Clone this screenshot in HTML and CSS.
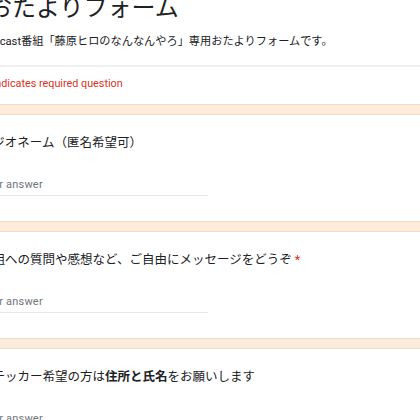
FILE: index.html
```html
<!DOCTYPE html>
<html lang="ja">
<head>
<meta charset="utf-8">
<title>おたよりフォーム</title>
<link rel="stylesheet" href="styles.css">
</head>
<body>
<div class="page">
  <div class="card header">
    <div class="title">おたよりフォーム</div>
    <div class="desc">Podcast番組「藤原ヒロのなんなんやろ」専用おたよりフォームです。</div>
    <div class="divider"></div>
    <div class="required">* Indicates required question</div>
  </div>
  <div class="card q">
    <div class="qtext">ラジオネーム（匿名希望可）</div>
    <div class="answer">Your answer</div>
  </div>
  <div class="card q">
    <div class="qtext">番組への質問や感想など、ご自由にメッセージをどうぞ<span class="star">*</span></div>
    <div class="answer">Your answer</div>
  </div>
  <div class="card q">
    <div class="qtext">ステッカー希望の方は<b>住所と氏名</b>をお願いします</div>
    <div class="answer">Your answer</div>
  </div>
</div>
</body>
</html>
```
FILE: styles.css
```css
html, body {
  margin: 0;
  padding: 0;
  background: #fdecd9;
  overflow: hidden;
  width: 420px;
  height: 420px;
}
.page {
  margin-left: -60px;
  width: 560px;
  display: flex;
  flex-direction: column;
  gap: 11px;
  font-family: Roboto, "Noto Sans CJK JP", sans-serif;
  color: #202124;
}
.card {
  background: #fff;
  box-shadow: 0 0 1px 1px rgba(0, 0, 0, 0.06);
}
.header {
  margin-top: -8px;
  padding: 0 0 12px 0;
}
.title {
  font-size: 24px;
  line-height: 32px;
  padding-left: 48px;
}
.desc {
  font-size: 11.2px;
  line-height: 16px;
  margin-top: 10px;
  padding-left: 40px;
}
.divider {
  height: 2px;
  background: #efefef;
  margin-top: 15px;
}
.required {
  font-size: 10.8px;
  line-height: 16px;
  color: #d93025;
  margin-top: 9px;
  padding-left: 45px;
}
.q {
  height: 106px;
  box-sizing: border-box;
  padding: 19px 0 0 40px;
}
.qtext {
  font-size: 12.5px;
  line-height: 18px;
}
.star {
  color: #d93025;
  margin-left: 3px;
}
.qtext b {
  font-weight: 700;
}
.answer {
  width: 228px;
  margin-top: 25px;
  font-size: 11px;
  line-height: 16px;
  letter-spacing: 0.2px;
  color: #70757a;
  padding-bottom: 2px;
  border-bottom: 1px solid #e6e6e6;
}
```
